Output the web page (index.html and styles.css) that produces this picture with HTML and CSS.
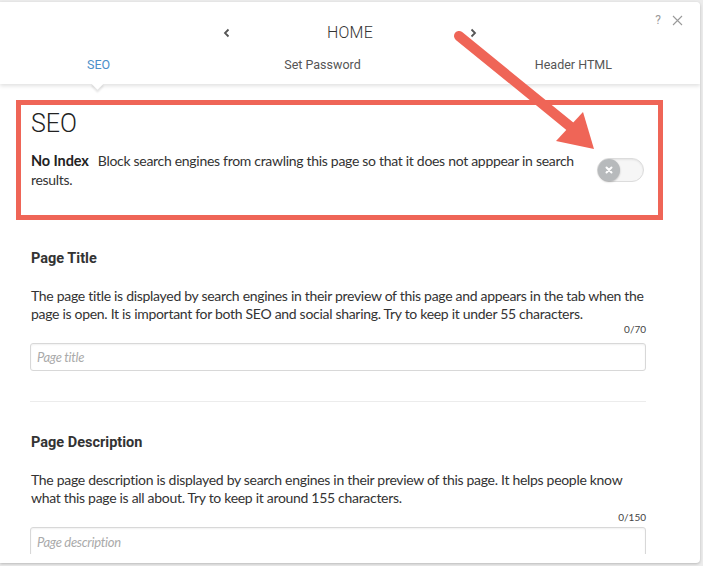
FILE: index.html
```html
<!DOCTYPE html>
<html>
<head>
<meta charset="utf-8">
<link rel="stylesheet" href="styles.css">
</head>
<body>
<div class="panel">
  <header class="header">
    <div class="title-row">
      <div></div>
      <div class="nav">
        <svg class="chev" width="8" height="10" viewBox="0 0 8 10"><path d="M5.5 1.5 L2 5 L5.5 8.5" fill="none" stroke="#555" stroke-width="1.8"/></svg>
        <span class="page-name">HOME</span>
        <svg class="chev" width="8" height="10" viewBox="0 0 8 10"><path d="M2.5 1.5 L6 5 L2.5 8.5" fill="none" stroke="#555" stroke-width="1.8"/></svg>
      </div>
      <div class="tools">
        <span class="help">?</span>
        <svg class="close" width="11" height="11" viewBox="0 0 11 11"><path d="M1 1 L10 10 M10 1 L1 10" stroke="#9a9a9a" stroke-width="1.1"/></svg>
      </div>
    </div>
    <nav class="tabs">
      <span class="tab active">SEO</span>
      <span class="tab">Set Password</span>
      <span class="tab">Header HTML</span>
    </nav>
  </header>
  <div class="content">
    <section class="seo-box">
      <h1 class="seo-title">SEO</h1>
      <div class="noindex-row">
        <p class="noindex-text"><b>No Index</b>Block search engines from crawling this page so that it does not apppear in search results.</p>
        <div class="toggle"><span class="knob"><svg width="8" height="8" viewBox="0 0 8 8"><path d="M1.5 1.5 L6.5 6.5 M6.5 1.5 L1.5 6.5" stroke="#fff" stroke-width="2" stroke-linecap="round"/></svg></span></div>
      </div>
    </section>
    <section class="field">
      <h2 class="field-title">Page Title</h2>
      <p class="field-desc">The page title is displayed by search engines in their preview of this page and appears in the tab when the page is open. It is important for both SEO and social sharing. Try to keep it under 55 characters.</p>
      <div class="counter">0/70</div>
      <div class="input"><span class="placeholder">Page title</span></div>
    </section>
    <hr class="divider">
    <section class="field field-second">
      <h2 class="field-title">Page Description</h2>
      <p class="field-desc">The page description is displayed by search engines in their preview of this page. It helps people know what this page is all about. Try to keep it around 155 characters.</p>
      <div class="counter">0/150</div>
      <div class="input tall"><span class="placeholder">Page description</span></div>
    </section>
  </div>
</div>
<svg class="annot-arrow" width="703" height="566" viewBox="0 0 703 566">
  <line x1="459" y1="36" x2="572" y2="128" stroke="#ef6557" stroke-width="10" stroke-linecap="round"/>
  <polygon points="556,141 583,112 594,149" fill="#ef6557"/>
</svg>
</body>
</html>
```
FILE: styles.css
```css
html, body {
  margin: 0;
  padding: 0;
}
body {
  background: #ececec;
  width: 703px;
  height: 566px;
  overflow: hidden;
  position: relative;
  font-family: "Lato", "Liberation Sans", sans-serif;
}
.panel {
  margin-top: 2px;
  width: 700px;
  height: 561px;
  background: #fff;
  border-radius: 0 4px 4px 0;
  box-shadow: 0 1px 3px rgba(0,0,0,0.22);
  display: flex;
  flex-direction: column;
  padding-bottom: 9px;
  box-sizing: border-box;
  overflow: hidden;
}
.header {
  height: 82px;
  flex: none;
  position: relative;
  z-index: 2;
  background: #fff;
  box-shadow: 0 2px 4px rgba(0,0,0,0.12);
  font-family: "Roboto", "Liberation Sans", sans-serif;
}
.title-row {
  display: grid;
  grid-template-columns: 1fr auto 1fr;
  padding-top: 20px;
  height: 22px;
}
.nav {
  display: flex;
  align-items: center;
  gap: 96px;
  height: 22px;
}
.chev { display: block; }
.page-name {
  font-size: 16px;
  font-weight: 300;
  color: #333;
  line-height: 22px;
  letter-spacing: 0.2px;
}
.tools {
  justify-self: end;
  display: flex;
  align-items: center;
  gap: 11px;
  margin-top: -9px;
  height: 14px;
  padding-right: 17px;
}
.help {
  font-size: 12px;
  color: #9a9a9a;
  line-height: 14px;
}
.close { display: block; }
.tabs {
  display: flex;
  justify-content: space-between;
  padding: 3px 88px 0 87px;
  margin-top: 10px;
}
.tab {
  font-size: 12.5px;
  line-height: 16px;
  color: #555;
  position: relative;
}
.tab.active { color: #4b8fc9; }
.tab.active::after {
  content: "";
  position: absolute;
  left: 50%;
  top: 22px;
  width: 9px;
  height: 9px;
  margin-left: -6px;
  background: #fff;
  transform: rotate(45deg);
  box-shadow: 2px 2px 2px rgba(0,0,0,0.1);
}
.content {
  flex: 1;
  overflow: hidden;
  position: relative;
  z-index: 1;
}
.seo-box {
  margin: 16px 37px 0 16px;
  border: 5px solid #ef6557;
  padding: 4px 14px 26px 10px;
}
.seo-title {
  margin: 0;
  font-family: "Roboto", "Liberation Sans", sans-serif;
  font-weight: 300;
  font-size: 25px;
  line-height: 30px;
  color: #222;
}
.noindex-row {
  margin-top: 12px;
  display: flex;
  align-items: center;
  justify-content: space-between;
}
.noindex-text {
  margin: 0;
  width: 555px;
  font-size: 14px;
  line-height: 19px;
  letter-spacing: -0.3px;
  color: #333;
}
.noindex-text b {
  font-weight: 700;
  font-size: 14.5px;
  color: #222;
  letter-spacing: -0.1px;
  margin-right: 9px;
}
.toggle {
  width: 45px;
  height: 22px;
  border-radius: 12px;
  background: #f6f6f6;
  border: 1px solid #dcdcdc;
  box-shadow: inset 0 1px 2px rgba(0,0,0,0.08);
  display: flex;
  align-items: center;
}
.knob {
  width: 22px;
  height: 22px;
  border-radius: 50%;
  background: #b7babc;
  display: flex;
  align-items: center;
  justify-content: center;
  box-shadow: 0 1px 2px rgba(0,0,0,0.25);
}
.knob svg { display: block; }
.field {
  margin: 0 54px 0 30px;
}
.field-title {
  margin: 29px 0 0 1px;
  font-family: "Roboto", "Liberation Sans", sans-serif;
  font-weight: 700;
  font-size: 14.5px;
  line-height: 20px;
  color: #333;
}
.field-desc {
  margin: 18px 0 0 1px;
  font-size: 14px;
  line-height: 18px;
  letter-spacing: -0.3px;
  color: #333;
}
.counter {
  text-align: right;
  font-size: 10px;
  line-height: 12px;
  color: #444;
}
.input {
  margin-top: 8px;
  height: 28px;
  box-sizing: border-box;
  border: 1px solid #d8d8d8;
  border-radius: 3px;
  box-shadow: inset 0 1px 2px rgba(0,0,0,0.06);
  display: flex;
  align-items: center;
  padding-left: 6px;
}
.input.tall {
  height: 40px;
  align-items: flex-start;
  padding-top: 6px;
}
.placeholder {
  font-size: 13px;
  font-style: italic;
  color: #aaa;
  letter-spacing: -0.3px;
}
.divider {
  margin: 30px 54px 0 30px;
  border: 0;
  border-top: 1px solid #ececec;
  height: 0;
}
.field-second .field-title {
  margin-top: 31px;
}
.field-second .counter {
  margin-top: 4px;
}
.field-second .input {
  margin-top: 4px;
}
.annot-arrow {
  position: absolute;
  left: 0;
  top: 0;
  pointer-events: none;
  z-index: 5;
}
```
